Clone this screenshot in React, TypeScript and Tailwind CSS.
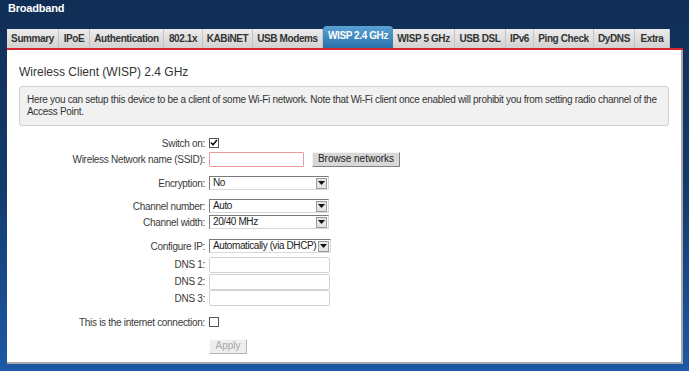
const tabs = [
  { label: 'Summary', w: 52 },
  { label: 'IPoE', w: 31 },
  { label: 'Authentication', w: 74 },
  { label: '802.1x', w: 39 },
  { label: 'KABiNET', w: 50 },
  { label: 'USB Modems', w: 70 },
  { label: 'WISP 2.4 GHz', w: 70, active: true },
  { label: 'WISP 5 GHz', w: 62 },
  { label: 'USB DSL', w: 51 },
  { label: 'IPv6', w: 28 },
  { label: 'Ping Check', w: 60 },
  { label: 'DyDNS', w: 41 },
  { label: 'Extra', w: 35 },
]

function Arrow() {
  return (
    <span className="w-[11px] h-[11px] bg-[#e4e4e4] border border-[#9a9a9a] flex items-center justify-center shrink-0">
      <svg width="7" height="4" viewBox="0 0 7 4">
        <path d="M0 0h7L3.5 4z" fill="#111" />
      </svg>
    </span>
  )
}

function Select({ value, w }: { value: string; w: number }) {
  return (
    <div
      className="h-[14px] bg-white border border-t-[#7a7a7a] border-l-[#7a7a7a] border-r-[#d8d8d8] border-b-[#d8d8d8] flex items-center justify-between pl-[3px] pr-[1px]"
      style={{ width: w }}
    >
      <span className="text-[10px] leading-none text-[#222] whitespace-nowrap tracking-[-0.4px]">{value}</span>
      <Arrow />
    </div>
  )
}

function Check({ on }: { on?: boolean }) {
  return (
    <span className="w-[10px] h-[10px] bg-white border border-[#555] flex items-center justify-center">
      {on && (
        <svg width="8" height="8" viewBox="0 0 8 8">
          <path d="M1 3.5l2 2.2L7 1" stroke="#111" strokeWidth="1.6" fill="none" />
        </svg>
      )}
    </span>
  )
}

function Row({ label, h = 16, mt = 0, children }: { label: string; h?: number; mt?: number; children?: React.ReactNode }) {
  return (
    <div className="flex items-center" style={{ height: h, marginTop: mt }}>
      <div className="w-[199px] text-right text-[10px] tracking-[-0.3px] text-[#3a3a3a] pr-[1px] whitespace-nowrap">{label}</div>
      <div className="flex items-center gap-[8px] pl-[3px]">{children}</div>
    </div>
  )
}

function TextInput({ w, red }: { w: number; red?: boolean }) {
  return (
    <div
      className={
        red
          ? 'h-[15px] bg-white border border-[#ec9a9a] rounded-[1px]'
          : 'h-[16px] bg-white border border-[#d0d4d8] rounded-[2px]'
      }
      style={{ width: w }}
    />
  )
}

export default function App() {
  return (
    <div
      className="w-[689px] h-[371px] overflow-hidden bg-gradient-to-b from-[#102e55] via-[#143a6c] to-[#1c59a6] text-[#333]"
      style={{ fontFamily: '"Liberation Sans", Arial, sans-serif' }}
    >
      <div className="h-[26px] pl-[8px] pt-[1px] text-[11px] font-bold text-white leading-[14px] tracking-[-0.2px]">Broadband</div>

      {/* Tabs */}
      <div className="flex items-end h-[22px] pl-[7px]">
        {tabs.map((t) =>
          t.active ? (
            <div
              key={t.label}
              className="h-[22px] rounded-t-[4px] bg-gradient-to-b from-[#5aa2d4] to-[#2b72ad] text-white text-[10px] font-bold tracking-[-0.4px] flex items-center justify-center pb-[3px]"
              style={{ width: t.w }}
            >
              {t.label}
            </div>
          ) : (
            <div
              key={t.label}
              className="h-[19px] bg-gradient-to-b from-[#ececec] to-[#d2d2d2] border-r border-[#c4c4c4] text-[#333] text-[10px] font-bold tracking-[-0.4px] flex items-center justify-center"
              style={{ width: t.w }}
            >
              {t.label}
            </div>
          )
        )}
      </div>
      <div className="ml-[7px] w-[676px] h-[2px] bg-[#d6242c]" />

      {/* Panel */}
      <div className="ml-[7px] w-[676px] h-[314px] bg-white border-r-2 border-b-2 border-[#a8a8a8] px-[12px] pt-[14px]">
        <div className="text-[12px] leading-[16px] text-[#333]">Wireless Client (WISP) 2.4 GHz</div>
        <div className="mt-[6px] h-[40px] bg-[#f1f1f1] border border-[#cfcfcf] rounded-[3px] pl-[7px] pt-[7px] text-[10px] leading-[12px] text-[#333] tracking-[-0.3px]">
          Here you can setup this device to be a client of some Wi-Fi network. Note that Wi-Fi client once enabled will prohibit you from setting radio channel of the
          <br />
          Access Point.
        </div>

        <div className="mt-[9px] -ml-[12px]">
          <Row label="Switch on:">
            <Check on />
          </Row>
          <Row label="Wireless Network name (SSID):">
            <TextInput w={95} red />
            <button className="h-[15px] w-[88px] bg-[#d8d8d8] border border-t-[#f4f4f4] border-l-[#f4f4f4] border-r-[#808080] border-b-[#808080] text-[10px] leading-none text-[#222]">
              Browse networks
            </button>
          </Row>
          <Row label="Encryption:" mt={8}>
            <Select value="No" w={120} />
          </Row>
          <Row label="Channel number:" mt={7}>
            <Select value="Auto" w={120} />
          </Row>
          <Row label="Channel width:">
            <Select value="20/40 MHz" w={120} />
          </Row>
          <Row label="Configure IP:" mt={8}>
            <Select value="Automatically (via DHCP)" w={122} />
          </Row>
          <Row label="DNS 1:" h={17} mt={2}>
            <TextInput w={121} />
          </Row>
          <Row label="DNS 2:" h={17}>
            <TextInput w={121} />
          </Row>
          <Row label="DNS 3:" h={16}>
            <TextInput w={121} />
          </Row>
          <Row label="This is the internet connection:" mt={8}>
            <Check />
          </Row>
          <Row label="" mt={8}>
            <button className="h-[15px] w-[38px] bg-[#eeeeee] border border-t-[#fafafa] border-l-[#fafafa] border-r-[#b5b5b5] border-b-[#b5b5b5] text-[10px] leading-none text-[#a8a8a8]">
              Apply
            </button>
          </Row>
        </div>
      </div>
    </div>
  )
}
